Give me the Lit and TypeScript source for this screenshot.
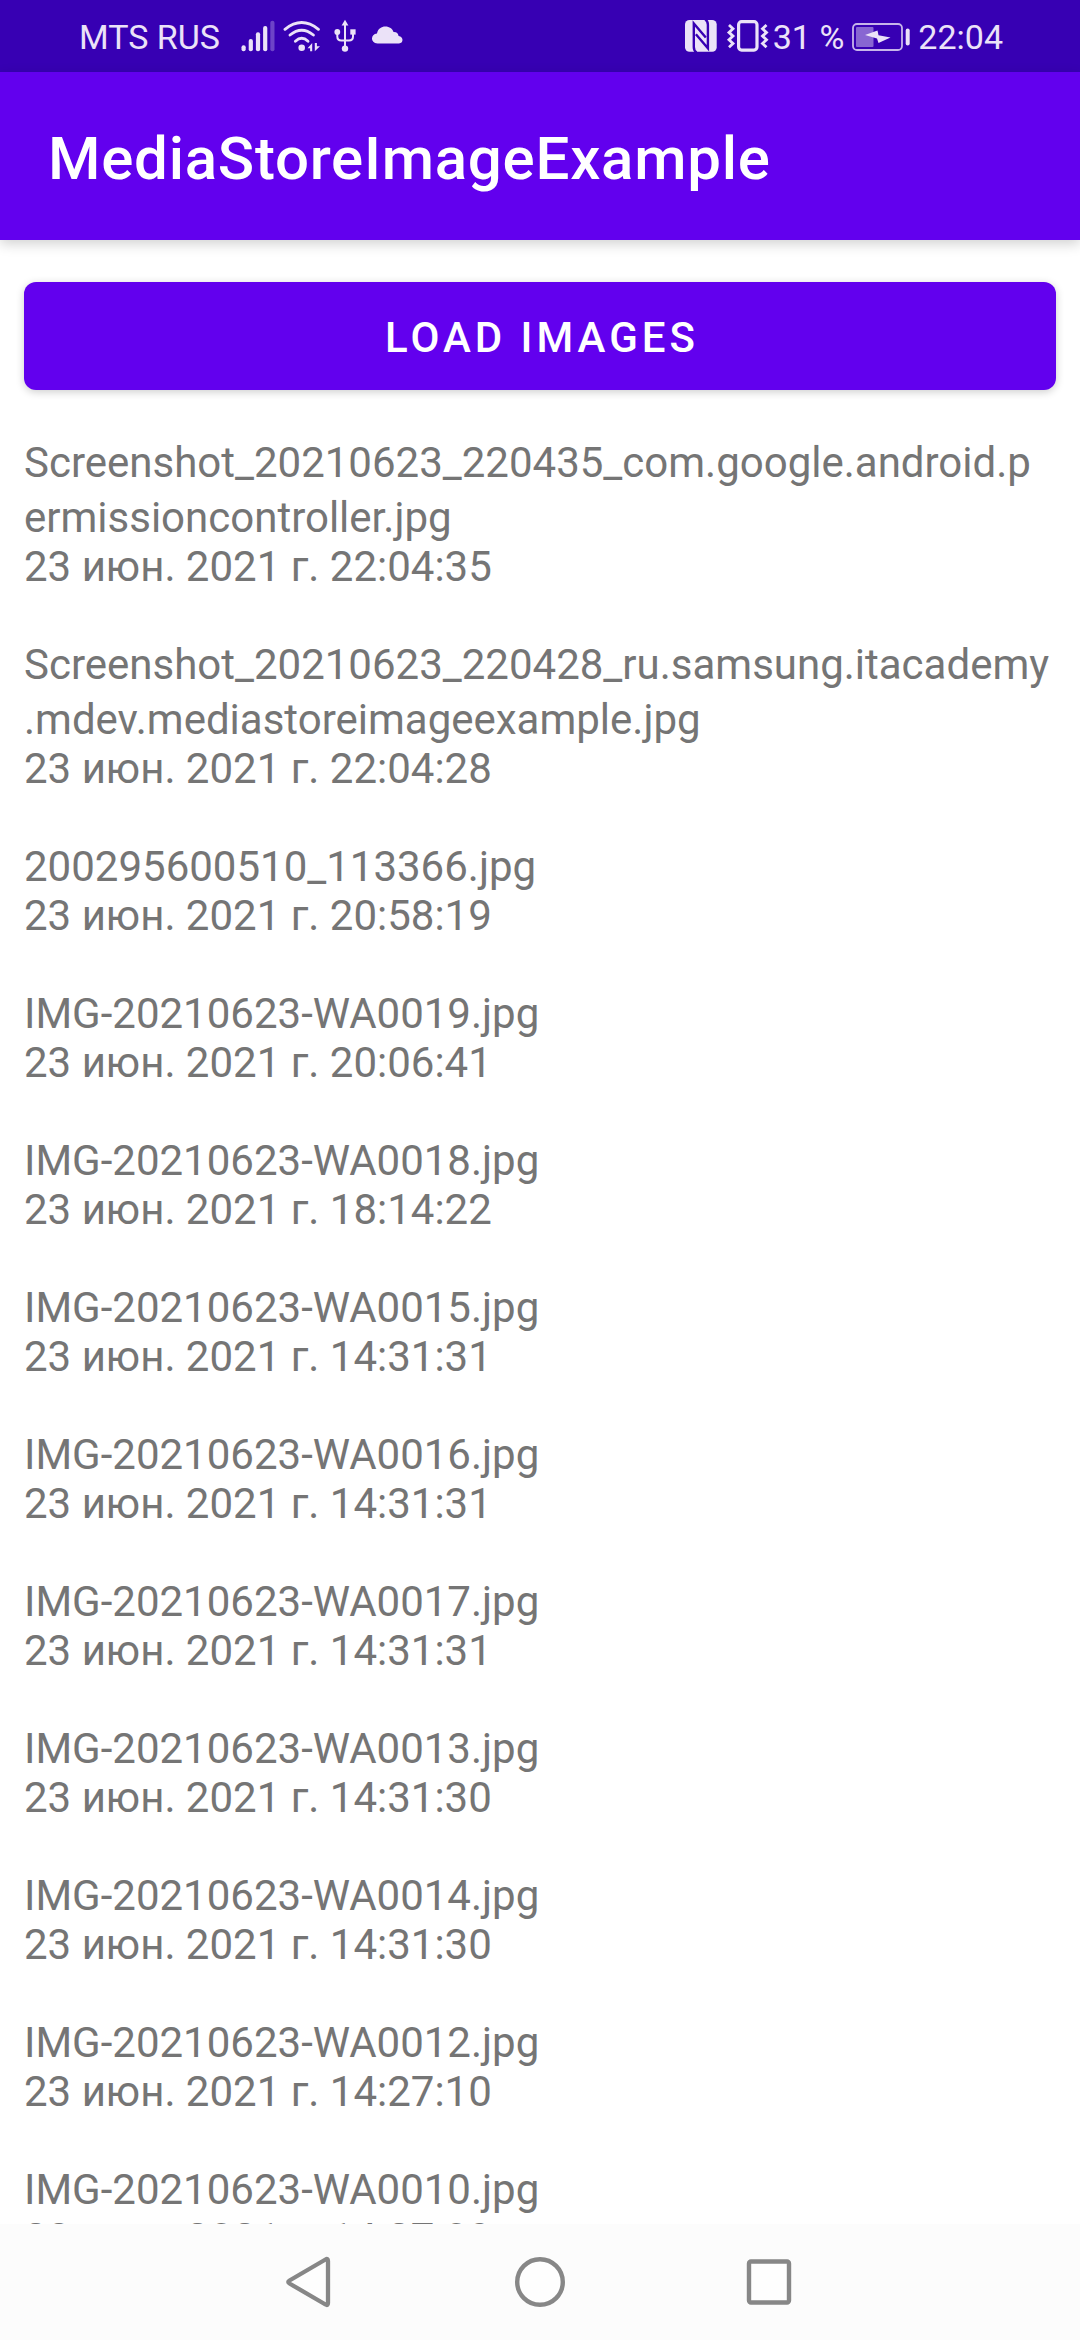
import { LitElement, html, css, svg } from "lit";
import { customElement, state } from "lit/decorators.js";

interface MediaImage {
  /** File name, split where a long name may wrap. */
  name: string[];
  date: string;
}

const IMAGES: MediaImage[] = [
  { name: ["Screenshot_20210623_220435_com.google.android.p", "ermissioncontroller.jpg"], date: "23 июн. 2021 г. 22:04:35" },
  { name: ["Screenshot_20210623_220428_ru.samsung.itacademy", ".mdev.mediastoreimageexample.jpg"], date: "23 июн. 2021 г. 22:04:28" },
  { name: ["200295600510_113366.jpg"], date: "23 июн. 2021 г. 20:58:19" },
  { name: ["IMG-20210623-WA0019.jpg"], date: "23 июн. 2021 г. 20:06:41" },
  { name: ["IMG-20210623-WA0018.jpg"], date: "23 июн. 2021 г. 18:14:22" },
  { name: ["IMG-20210623-WA0015.jpg"], date: "23 июн. 2021 г. 14:31:31" },
  { name: ["IMG-20210623-WA0016.jpg"], date: "23 июн. 2021 г. 14:31:31" },
  { name: ["IMG-20210623-WA0017.jpg"], date: "23 июн. 2021 г. 14:31:31" },
  { name: ["IMG-20210623-WA0013.jpg"], date: "23 июн. 2021 г. 14:31:30" },
  { name: ["IMG-20210623-WA0014.jpg"], date: "23 июн. 2021 г. 14:31:30" },
  { name: ["IMG-20210623-WA0012.jpg"], date: "23 июн. 2021 г. 14:27:10" },
  { name: ["IMG-20210623-WA0010.jpg"], date: "23 июн. 2021 г. 14:27:09" },
];

const icon = (width: number, content: unknown) => html`
  <svg width=${width} height="40" viewBox="0 0 ${width} 40" fill="currentColor" aria-hidden="true">${content}</svg>
`;

const signalIcon = icon(34, svg`
  <rect x="0.5" y="28.3" width="4.2" height="6" rx="2" />
  <rect x="7.7" y="22" width="4.2" height="12.3" rx="2" />
  <rect x="14.9" y="15.3" width="4.2" height="19" rx="2" />
  <rect x="22.1" y="9" width="4.2" height="25.3" rx="2" />
  <rect x="29.3" y="3.7" width="4.2" height="30.6" rx="2" opacity="0.3" />
`);

const wifiIcon = icon(38, svg`
  <g fill="none" stroke="currentColor" stroke-width="2.9" stroke-linecap="round">
    <path d="M2 12.3Q18.7-1.2 35.4 12.3" />
    <path d="M7 18Q18.7 8.4 30.4 18" />
    <path d="M12.4 24.2Q18.7 18.4 25 24.2" />
  </g>
  <circle cx="18.7" cy="30.8" r="3.3" />
  <path d="M24.6 31.2L29.2 26v8.3h-2.1v-3.1zM31.8 26v8.3l5.2-5h-3.1V26z" />
`);

const usbIcon = icon(32, svg`
  <path d="M16 2.8l3.4 5.6h-6.8z" />
  <path d="M16 7v23M8.3 15v4.5q0 4 4 4h7.7q4 0 4-4V15" fill="none" stroke="currentColor" stroke-width="2" />
  <circle cx="8.3" cy="15" r="2.9" />
  <rect x="21.3" y="12.3" width="5.3" height="5.3" />
  <circle cx="16" cy="31.6" r="3.2" />
`);

const cloudIcon = icon(36, svg`
  <path d="M8.5 26.4C1 26.4 1.5 17.2 8 16.6C9 11.6 12.5 9.6 16.3 9.6C20.5 9.6 23.5 12 24.5 15C27.5 14.8 29.3 16.5 29.6 19C35 20 34.5 26.4 30 26.4Z" />
`);

const nfcIcon = icon(36, svg`
  <rect x="0" y="3" width="31.7" height="31.7" rx="4.5" />
  <g class="cut" fill="none" stroke-width="2.4">
    <path d="M11.5 35.5Q8.8 33.5 8.8 30V6.5L20.8 20.5" />
    <path d="M20.2 2.2Q22.9 4.2 22.9 7.7V31.2L10.9 17.2" />
  </g>
`);

const vibrateIcon = icon(44, svg`
  <rect x="13.6" y="4.7" width="18.4" height="28.4" rx="3" fill="none" stroke="currentColor" stroke-width="3.2" />
  <g fill="none" stroke="currentColor" stroke-width="2.8">
    <path d="M4 8l4 3.7-4 3.7 4 3.7-4 3.7 4 3.7-4 3.7" />
    <path d="M41.5 8l-4 3.7 4 3.7-4 3.7 4 3.7-4 3.7 4 3.7" />
  </g>
`);

const batteryIcon = icon(66, svg`
  <rect x="5" y="7" width="49" height="26" rx="4" fill="none" stroke="currentColor" stroke-width="1.8" opacity="0.8" />
  <rect x="8" y="10" width="17.5" height="20" rx="1" opacity="0.45" />
  <path d="M17 18L29.5 13.5L30.5 18.2L42.5 20.5L30.5 26L29 21.5Z" />
  <rect x="57.7" y="11.5" width="4" height="17" rx="2" />
`);

@customElement("app-root")
export class AppRoot extends LitElement {
  @state() private images: MediaImage[] = IMAGES;

  static styles = css`
    :host {
      display: flex;
      flex-direction: column;
      height: 100vh;
      overflow: hidden;
      background: #ffffff;
      color: #757575;
      font-family: Roboto, "Noto Sans", sans-serif;
      font-size: 42px;
    }
    svg {
      display: block;
      flex: none;
    }
    .status {
      flex: none;
      display: flex;
      justify-content: space-between;
      align-items: center;
      height: 72px;
      box-sizing: border-box;
      padding: 2px 77px 0 79px;
      background: #3700b3;
      color: #ebe2f8;
      font-size: 34px;
      line-height: 40px;
      white-space: nowrap;
    }
    .cut {
      stroke: #3700b3;
    }
    .side {
      display: flex;
      align-items: center;
      gap: 8px;
    }
    .side.end {
      gap: 4px;
    }
    .carrier {
      margin-right: 13px;
    }
    .appbar {
      flex: none;
      display: flex;
      align-items: center;
      height: 168px;
      box-sizing: border-box;
      padding: 6px 48px 0;
      background: #6200ee;
      color: #ffffff;
      box-shadow: 0 4px 12px rgba(0, 0, 0, 0.18);
    }
    .title {
      margin: 0;
      font-size: 60px;
      font-weight: 500;
      line-height: 72px;
      letter-spacing: 0.0125em;
    }
    .content {
      flex: 1;
      min-height: 0;
      overflow: hidden;
      display: flex;
      flex-direction: column;
      padding: 42px 24px 0;
      gap: 45px;
    }
    .load {
      flex: none;
      height: 108px;
      padding: 2px 0 0 4px;
      border: 0;
      border-radius: 12px;
      background: #6200ee;
      color: #ffffff;
      font: inherit;
      font-weight: 500;
      letter-spacing: 4px;
      text-transform: uppercase;
      box-shadow: 0 2px 8px rgba(0, 0, 0, 0.2);
    }
    .list {
      list-style: none;
      margin: 0;
      padding: 0;
    }
    .item {
      margin-bottom: 49px;
    }
    .name {
      display: block;
      line-height: 55px;
      overflow-wrap: anywhere;
    }
    .date {
      display: block;
      line-height: 43px;
    }
    .nav {
      flex: none;
      display: flex;
      justify-content: center;
      align-items: center;
      gap: 149px;
      height: 116px;
      background: #fcfcfc;
    }
    .key {
      padding: 0;
      border: 0;
      background: none;
      color: #878787;
    }
  `;

  private load() {
    this.images = [...IMAGES];
  }

  render() {
    return html`
      <div class="status">
        <div class="side">
          <span class="carrier">MTS RUS</span>
          ${signalIcon} ${wifiIcon} ${usbIcon} ${cloudIcon}
        </div>
        <div class="side end">
          ${nfcIcon} ${vibrateIcon}
          <span>31 %</span>
          ${batteryIcon}
          <span>22:04</span>
        </div>
      </div>
      <header class="appbar"><h1 class="title">MediaStoreImageExample</h1></header>
      <main class="content">
        <button class="load" type="button" @click=${this.load}>Load images</button>
        <ul class="list">
          ${this.images.map(
            (image) => html`
              <li class="item">
                <span class="name">${image.name.map((part, i) => (i ? html`<wbr />${part}` : part))}</span>
                <span class="date">${image.date}</span>
              </li>
            `,
          )}
        </ul>
      </main>
      <nav class="nav" aria-label="System">
        <button class="key" type="button" aria-label="Back">
          <svg width="80" height="80" viewBox="0 0 80 80">
            <path d="M54.5 17.5Q57 16 57 19V61Q57 64 54.5 62.5L18.500 41.500Q16 40 18.500 38.500Z" fill="#fefefe" stroke="currentColor" stroke-width="4.3" stroke-linejoin="round" />
          </svg>
        </button>
        <button class="key" type="button" aria-label="Home">
          <svg width="80" height="80" viewBox="0 0 80 80">
            <circle cx="40" cy="40" r="22.8" fill="#fefefe" stroke="currentColor" stroke-width="4.4" />
          </svg>
        </button>
        <button class="key" type="button" aria-label="Recents">
          <svg width="80" height="80" viewBox="0 0 80 80">
            <rect x="20" y="19.5" width="40" height="41" rx="2" fill="#fefefe" stroke="currentColor" stroke-width="4.4" />
          </svg>
        </button>
      </nav>
    `;
  }
}
